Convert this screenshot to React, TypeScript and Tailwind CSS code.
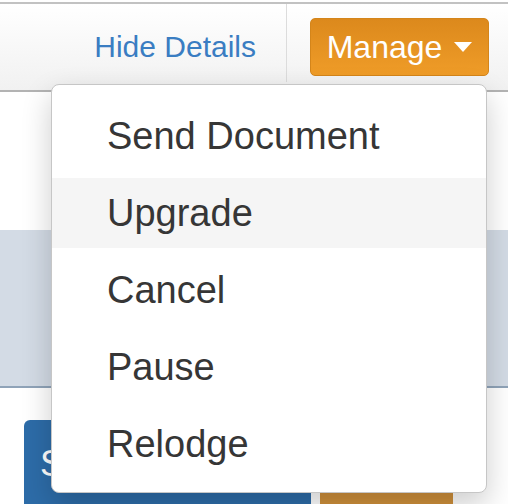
export default function App() {
  const items = ['Send Document', 'Upgrade', 'Cancel', 'Pause', 'Relodge'];

  return (
    <div
      className="relative w-[508px] h-[504px] overflow-hidden bg-white pt-[2px]"
      style={{ fontFamily: '"Liberation Sans", Arial, sans-serif' }}
    >
      {/* Header bar */}
      <div className="h-[90px] border-t-2 border-b-2 border-t-[#c2c2c2] border-b-[#b3b3b3] bg-gradient-to-b from-white to-[#f1f1f1] flex items-center justify-end pr-[19px]">
        <a className="text-[30px] text-[#3a7dc2] leading-none">Hide Details</a>
        <div className="self-start w-px h-[78px] bg-[#dcdcdc] ml-[30px]" />
        <button className="ml-[23px] w-[179px] h-[58px] rounded-[5px] border border-[#d4851a] bg-gradient-to-b from-[#dc891c] to-[#ef9c28] text-white text-[32px] flex items-center justify-center gap-[12px]">
          <span className="leading-none">Manage</span>
          <span className="w-0 h-0 border-l-[9px] border-r-[9px] border-t-[10px] border-l-transparent border-r-transparent border-t-white" />
        </button>
      </div>

      {/* Page content behind the menu */}
      <div className="mt-[138px] h-[158px] bg-[#d3dbe5] border-b-2 border-[#8fa3b8]" />
      <div className="mt-[32px] flex items-start">
        <div className="ml-[24px] w-[287px] h-[90px] rounded-tl-[6px] bg-[#2d6ca8] text-white text-[36px] pl-[16px] pt-[26px] leading-none">
          Save
        </div>
        <div className="ml-[9px] mt-[71px] w-[133px] h-[20px] bg-[#cf903b]" />
      </div>

      {/* Dropdown menu */}
      <div className="absolute left-[51px] top-[84px] w-[436px] h-[409px] bg-white border border-[#c6c6c6] rounded-[8px] shadow-[0_12px_30px_rgba(0,0,0,0.2)] pt-[16px] flex flex-col gap-[7px]">
        {items.map(item => (
          <div
            key={item}
            className={`h-[70px] flex items-center pl-[55px] text-[38px] text-[#363636] ${item === 'Upgrade' ? 'bg-[#f5f5f5]' : ''}`}
          >
            {item}
          </div>
        ))}
      </div>
    </div>
  );
}
